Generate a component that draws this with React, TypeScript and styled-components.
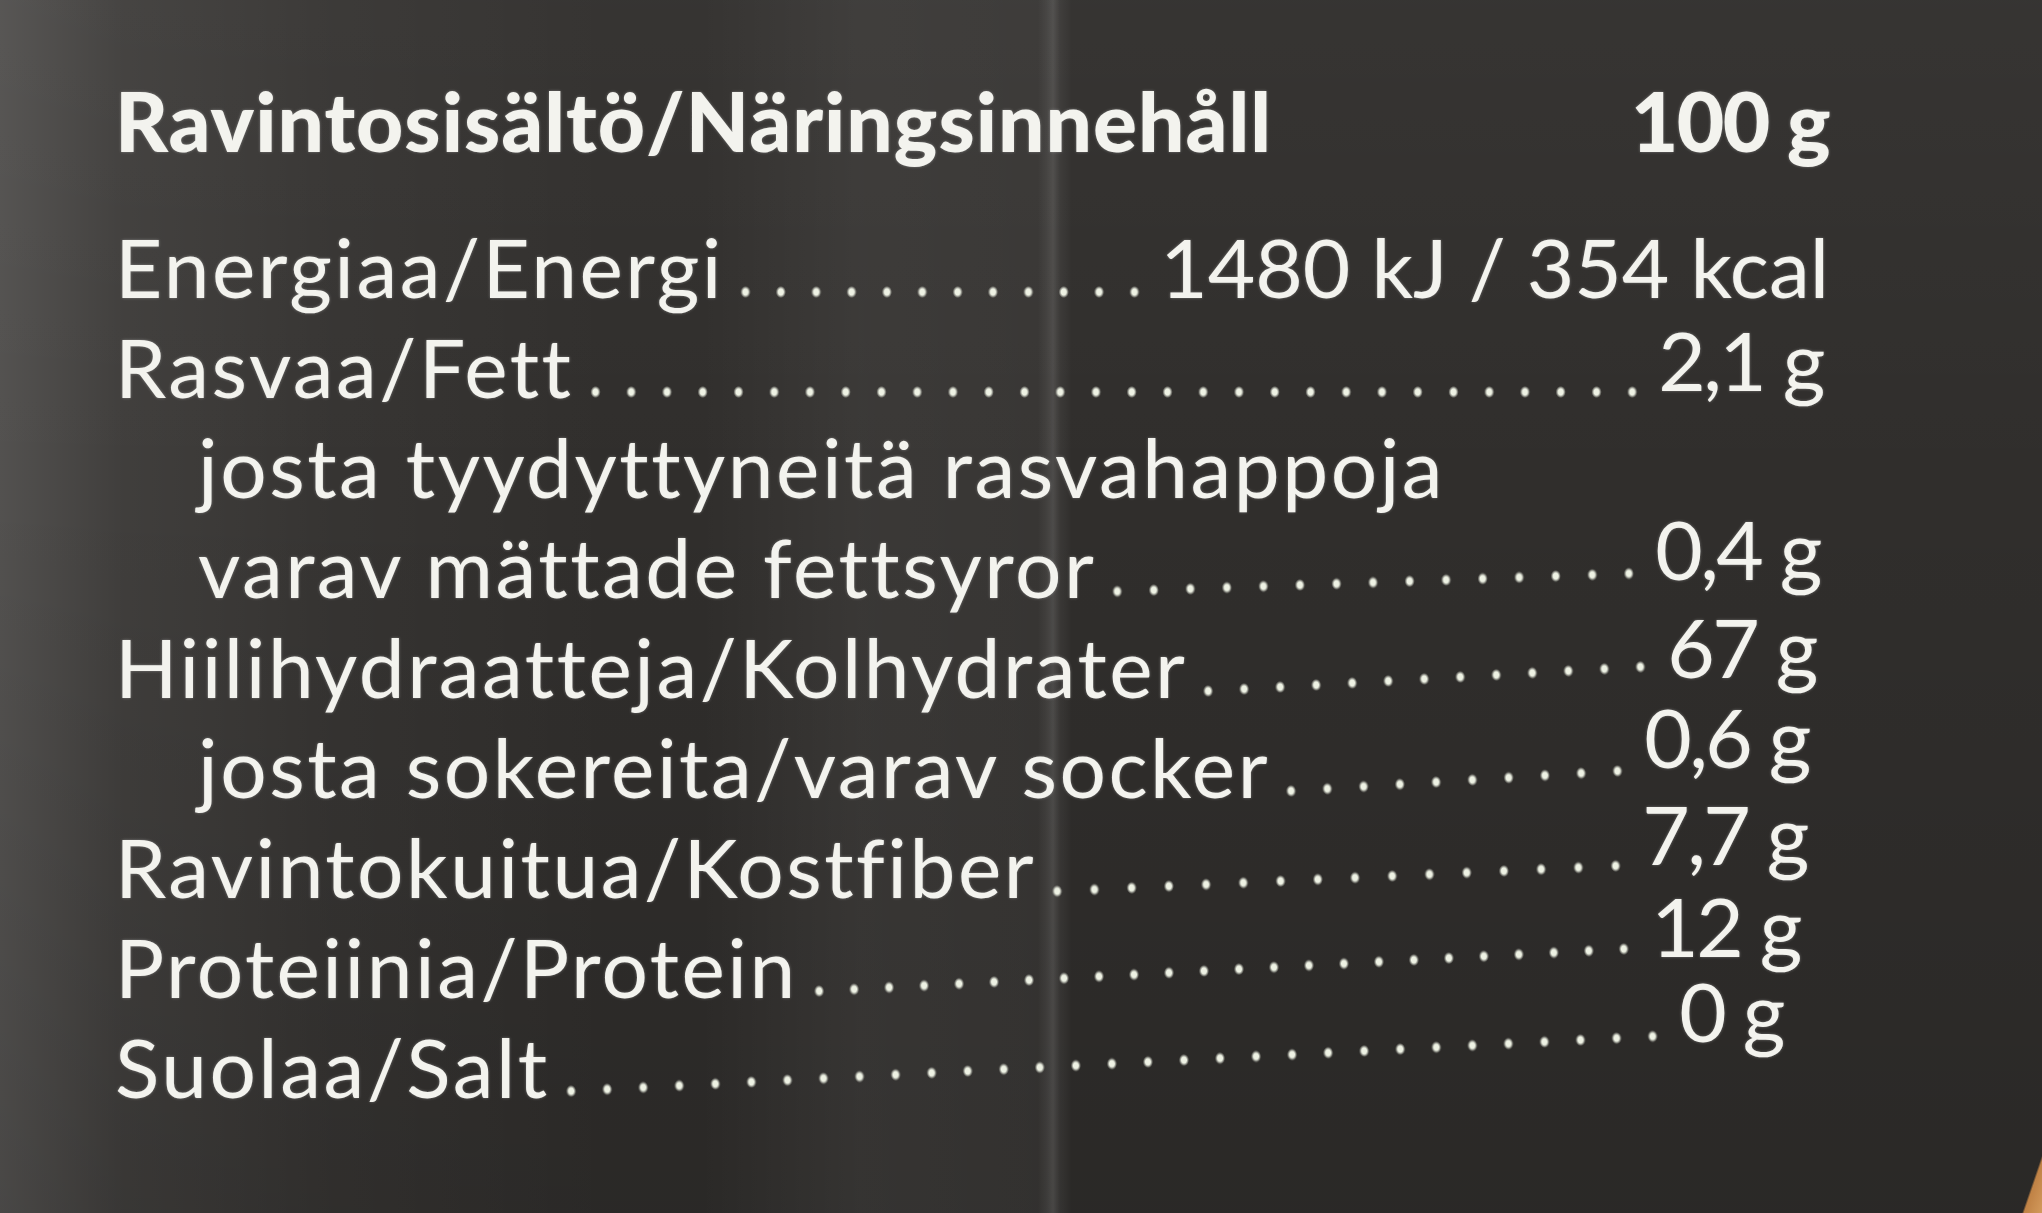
import React from 'react'
import styled, { createGlobalStyle } from 'styled-components'

const GlobalStyle = createGlobalStyle`
  html, body {
    margin: 0;
    padding: 0;
    background: #2f2d2b;
  }
`

const Label = styled.div`
  box-sizing: border-box;
  width: 2042px;
  height: 1213px;
  overflow: hidden;
  padding: 70px 213px 0 115px;
  color: #f3f3ee;
  font-family: Lato, 'Liberation Sans', sans-serif;
  text-shadow: 0 0 3px rgba(255, 255, 255, 0.35);
  background-color: #302e2c;
  background-image:
    linear-gradient(109deg, transparent calc(100% - 19px), #c08245 calc(100% - 17px), #d39a5c 100%),
    linear-gradient(90deg, transparent 1038px, rgba(255, 255, 255, 0.06) 1046px, rgba(255, 255, 255, 0.13) 1053px, rgba(255, 255, 255, 0.05) 1060px, transparent 1072px),
    linear-gradient(90deg, transparent 700px, rgba(255, 255, 255, 0.05) 860px, rgba(255, 255, 255, 0.04) 1040px, transparent 1060px),
    linear-gradient(180deg, rgba(255, 255, 255, 0.03) 0%, transparent 40%, rgba(0, 0, 0, 0.12) 100%),
    linear-gradient(90deg, rgba(255, 255, 255, 0.17) 0%, rgba(255, 255, 255, 0.08) 6%, rgba(255, 255, 255, 0.03) 16%, transparent 30%);
`

const Heading = styled.div`
  display: flex;
  justify-content: space-between;
  align-items: baseline;
  height: 100px;
  line-height: 100px;
  margin-bottom: 46px;
  font-size: 82px;
  font-weight: 900;
  white-space: nowrap;
`

const Title = styled.span`
  letter-spacing: 1px;
`

const Per = styled.span`
  letter-spacing: -1.5px;
`

const Rows = styled.div`
  display: flex;
  flex-direction: column;
`

const Row = styled.div<{ $indent?: boolean; $inset?: number }>`
  display: flex;
  align-items: baseline;
  height: 100px;
  line-height: 100px;
  padding-left: ${(p) => (p.$indent ? 83 : 0)}px;
  padding-right: ${(p) => p.$inset ?? 0}px;
  font-size: 82px;
  font-weight: 400;
  white-space: nowrap;
`

const Name = styled.span`
  flex: none;
  letter-spacing: 2.5px;
`

const Leader = styled.span<{ $tilt?: number }>`
  flex: 1;
  height: 12px;
  margin: 0 8px 0 4px;
  transform-origin: left bottom;
  transform: rotate(${(p) => -(p.$tilt ?? 0)}deg);
  background-image: radial-gradient(ellipse 5px 6px at center, #eef2e4 50%, rgba(238, 242, 228, 0) 100%);
  background-size: 35px 12px;
  background-repeat: space no-repeat;
  background-position: left bottom;
`

const Value = styled.span<{ $rise?: number; $tight?: boolean }>`
  flex: none;
  line-height: 60px;
  letter-spacing: ${(p) => (p.$tight ? -2.5 : 0)}px;
  transform: translateY(${(p) => -(p.$rise ?? 0)}px);
`

type Nutrient = {
  name: string
  value?: string
  indent?: boolean
  inset?: number
  rise?: number
  tilt?: number
}

const nutrients: Nutrient[] = [
  { name: 'Energiaa/Energi', value: '1480 kJ / 354 kcal' },
  { name: 'Rasvaa/Fett', value: '2,1 g', inset: 6, rise: 7 },
  { name: 'josta tyydyttyneitä rasvahappoja', indent: true },
  { name: 'varav mättade fettsyror', value: '0,4 g', indent: true, inset: 9, rise: 18, tilt: 2 },
  { name: 'Hiilihydraatteja/Kolhydrater', value: '67 g', inset: 13, rise: 20, tilt: 3.2 },
  { name: 'josta sokereita/varav socker', value: '0,6 g', indent: true, inset: 20, rise: 30, tilt: 3.5 },
  { name: 'Ravintokuitua/Kostfiber', value: '7,7 g', inset: 22, rise: 33, tilt: 2.6 },
  { name: 'Proteiinia/Protein', value: '12 g', inset: 29, rise: 41, tilt: 3 },
  { name: 'Suolaa/Salt', value: '0 g', inset: 46, rise: 56, tilt: 2.9 },
]

const App: React.FC = () => {
  return (
    <>
      <GlobalStyle />
      <Label>
        <Heading>
          <Title>Ravintosisältö/Näringsinnehåll</Title>
          <Per>100 g</Per>
        </Heading>
        <Rows>
          {nutrients.map((n) => (
            <Row key={n.name} $indent={n.indent} $inset={n.inset}>
              <Name>{n.name}</Name>
              {n.value ? (
                <>
                  <Leader $tilt={n.tilt} />
                  <Value $rise={n.rise} $tight={n.value.endsWith(' g')}>
                    {n.value}
                  </Value>
                </>
              ) : null}
            </Row>
          ))}
        </Rows>
      </Label>
    </>
  )
}

export default App
